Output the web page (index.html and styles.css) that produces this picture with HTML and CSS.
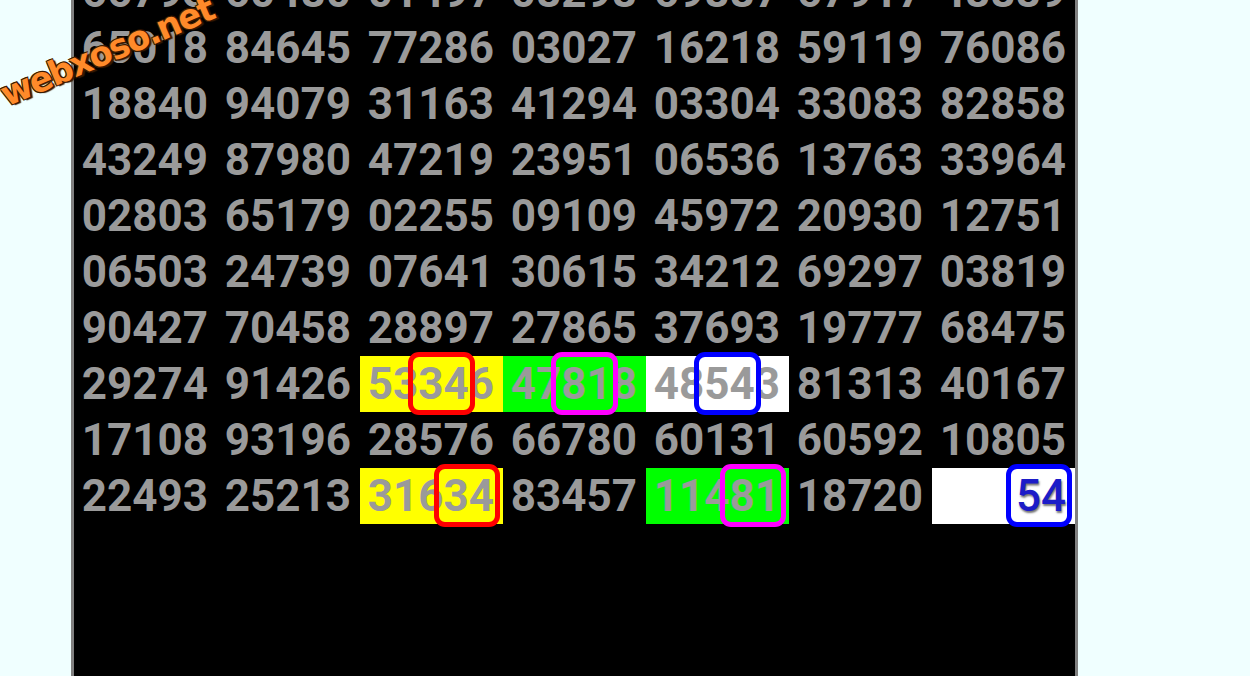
FILE: index.html
```html
<!DOCTYPE html>
<html lang="en">
<head>
    <meta charset="UTF-8">
    <meta name="viewport" content="width=device-width, initial-scale=1.0">
    <title>webxoso</title>
    <link rel="stylesheet" href="styles.css">
</head>
<body>
    <div class="logo">webxoso.net</div>
    <div class="board">
        <div class="grid">
            <div class="cell">66793</div><div class="cell">60480</div><div class="cell">01497</div><div class="cell">08298</div><div class="cell">69887</div><div class="cell">67917</div><div class="cell">48889</div>
            <div class="cell">65018</div><div class="cell">84645</div><div class="cell">77286</div><div class="cell">03027</div><div class="cell">16218</div><div class="cell">59119</div><div class="cell">76086</div>
            <div class="cell">18840</div><div class="cell">94079</div><div class="cell">31163</div><div class="cell">41294</div><div class="cell">03304</div><div class="cell">33083</div><div class="cell">82858</div>
            <div class="cell">43249</div><div class="cell">87980</div><div class="cell">47219</div><div class="cell">23951</div><div class="cell">06536</div><div class="cell">13763</div><div class="cell">33964</div>
            <div class="cell">02803</div><div class="cell">65179</div><div class="cell">02255</div><div class="cell">09109</div><div class="cell">45972</div><div class="cell">20930</div><div class="cell">12751</div>
            <div class="cell">06503</div><div class="cell">24739</div><div class="cell">07641</div><div class="cell">30615</div><div class="cell">34212</div><div class="cell">69297</div><div class="cell">03819</div>
            <div class="cell">90427</div><div class="cell">70458</div><div class="cell">28897</div><div class="cell">27865</div><div class="cell">37693</div><div class="cell">19777</div><div class="cell">68475</div>
            <div class="cell">29274</div><div class="cell">91426</div><div class="cell yellow">53<span class="hit red">34</span>6</div><div class="cell green">47<span class="hit pink">81</span>8</div><div class="cell white">48<span class="hit blue">54</span>3</div><div class="cell">81313</div><div class="cell">40167</div>
            <div class="cell">17108</div><div class="cell">93196</div><div class="cell">28576</div><div class="cell">66780</div><div class="cell">60131</div><div class="cell">60592</div><div class="cell">10805</div>
            <div class="cell">22493</div><div class="cell">25213</div><div class="cell yellow">316<span class="hit red">34</span></div><div class="cell">83457</div><div class="cell green">114<span class="hit pink">81</span></div><div class="cell">18720</div><div class="cell white"><span class="hit blue result">54</span></div>
        </div>
    </div>
</body>
</html>
```

FILE: styles.css
```css
body {
    margin: 0;
    background: #f0ffff;
    overflow: hidden;
    font-family: Roboto, "Liberation Sans", sans-serif;
}
.board {
    width: 1001px;
    height: 760px;
    margin: -39px 0 0 71px;
    background: #000;
    border: 3px solid #808080;
}
.grid {
    display: grid;
    grid-template-columns: repeat(7, 143px);
    grid-auto-rows: 56px;
}
.cell {
    color: #9a9a9a;
    font-size: 44px;
    font-weight: bold;
    line-height: 56px;
    text-align: right;
    padding-right: 9px;
    white-space: nowrap;
}
.yellow {
    background: #ffff00;
}
.green {
    background: #00ff00;
}
.white {
    background: #fff;
}
.hit {
    position: relative;
    display: inline-block;
}
.hit::after {
    content: '';
    position: absolute;
    left: -10px;
    right: -6px;
    top: -4px;
    bottom: -3px;
    border: 5px solid;
    border-radius: 11px;
}
.red::after {
    border-color: #f00;
}
.pink::after {
    border-color: #f0f;
}
.blue::after {
    border-color: #00f;
}
.result {
    color: #1c1cc8;
    font-weight: 500;
    text-shadow: 1px 2px 2px #777;
}
.logo {
    position: absolute;
    left: 10px;
    top: 74px;
    transform: rotate(-23deg);
    transform-origin: left bottom;
    font-family: "DejaVu Sans", sans-serif;
    font-size: 34px;
    font-weight: bold;
    letter-spacing: -1.5px;
    color: #ff8a2a;
    text-shadow: -1px -1px 0 #3a1a00, 1px -1px 0 #3a1a00, -1px 1px 0 #3a1a00, 2px 2px 1px #3a1a00;
    z-index: 2;
}
```
